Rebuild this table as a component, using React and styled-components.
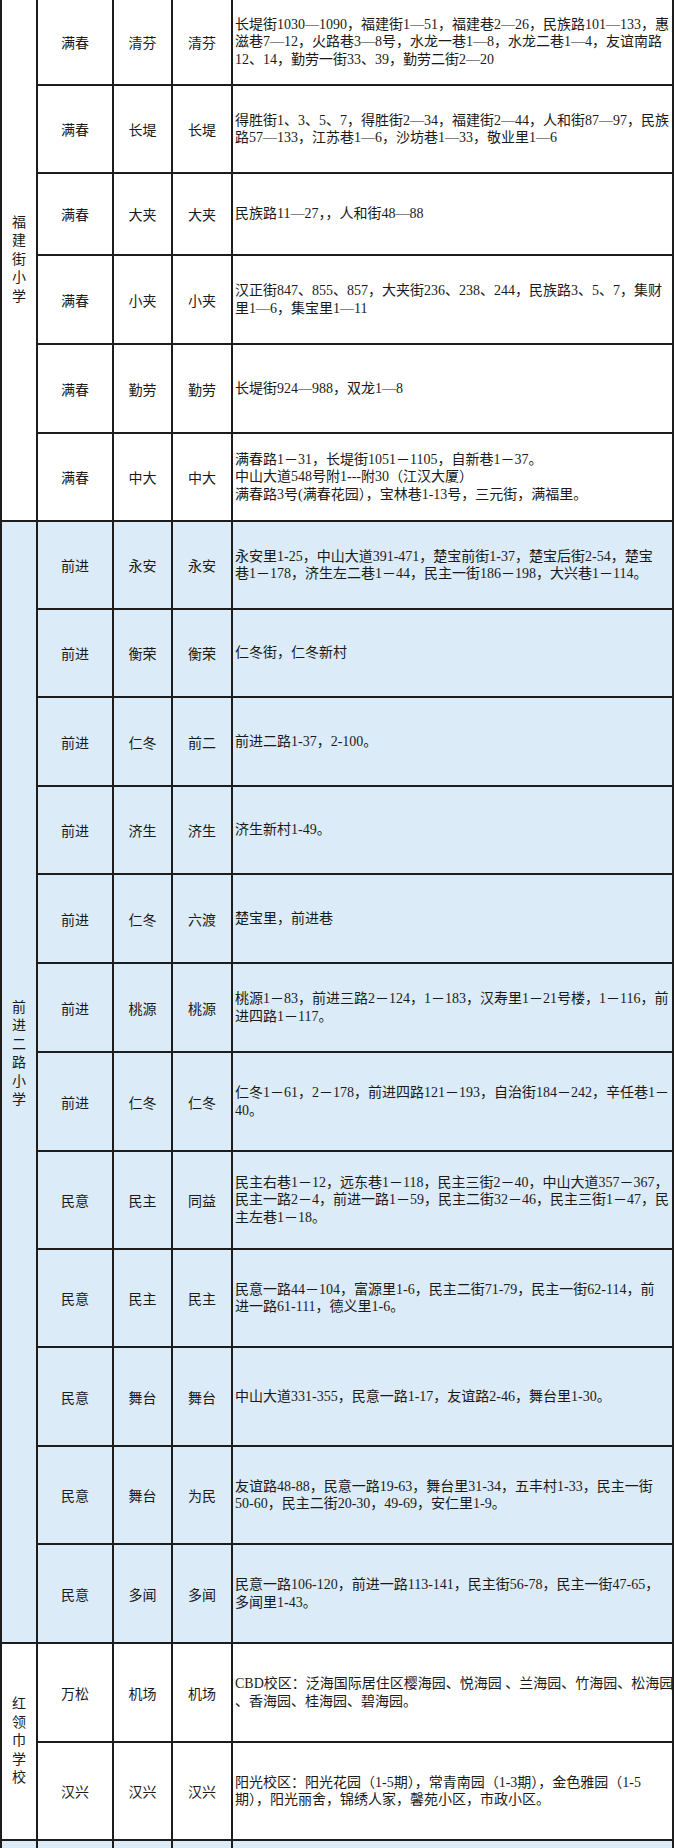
import React from "react";
import styled, { createGlobalStyle } from "styled-components";

const BLUE = "#dcebf8";
const LINE = "#1d1d1d";

const GlobalStyle = createGlobalStyle`
  html, body {
    margin: 0;
    padding: 0;
    overflow: hidden;
    background: #fff;
  }
  body {
    font-family: "Liberation Serif", "Noto Sans CJK SC", serif;
    color: #1a1a1a;
  }
`;

const Sheet = styled.div`
  width: 674px;
  height: 1848px;
  overflow: hidden;
  display: flex;
  flex-direction: column;
  font-size: 14px;
`;

const Group = styled.section`
  display: flex;
  flex-shrink: 0;
  background: ${(p) => (p.$blue ? BLUE : "#fff")};
  border-left: 2px solid ${LINE};
`;

const SchoolCell = styled.div`
  width: 36px;
  flex-shrink: 0;
  box-sizing: border-box;
  border-right: 2px solid ${LINE};
  border-bottom: 2px solid ${LINE};
  display: flex;
  align-items: center;
  justify-content: center;
  padding-bottom: ${(p) => p.$lift || 0}px;
`;

const VerticalName = styled.span`
  width: 1em;
  line-height: 18.5px;
  text-align: center;
  word-break: break-all;
`;

const Rows = styled.div`
  flex: 1;
  display: flex;
  flex-direction: column;
`;

const Row = styled.div`
  display: grid;
  grid-template-columns: 76px 59px 60px 1fr;
  height: ${(p) => p.$h}px;
`;

const Cell = styled.div`
  box-sizing: border-box;
  border-right: 2px solid ${LINE};
  border-bottom: 2px solid ${LINE};
  display: flex;
  align-items: center;
  justify-content: center;
`;

const Address = styled(Cell)`
  justify-content: flex-start;
  padding-left: 2px;
  overflow: hidden;
`;

const AddressText = styled.span`
  white-space: pre;
  line-height: 17.5px;
`;

const groups = [
  {
    school: "福建街小学",
    blue: false,
    rows: [
      { h: 86, a: "满春", b: "清芬", c: "清芬", text: "长堤街1030—1090，福建街1—51，福建巷2—26，民族路101—133，惠\n滋巷7—12，火路巷3—8号，水龙一巷1—8，水龙二巷1—4，友谊南路\n12、14，勤劳一街33、39，勤劳二街2—20" },
      { h: 88, a: "满春", b: "长堤", c: "长堤", text: "得胜街1、3、5、7，得胜街2—34，福建街2—44，人和街87—97，民族\n路57—133，江苏巷1—6，沙坊巷1—33，敬业里1—6" },
      { h: 82, a: "满春", b: "大夹", c: "大夹", text: "民族路11—27，，人和街48—88" },
      { h: 89, a: "满春", b: "小夹", c: "小夹", text: "汉正街847、855、857，大夹街236、238、244，民族路3、5、7，集财\n里1—6，集宝里1—11" },
      { h: 89, a: "满春", b: "勤劳", c: "勤劳", text: "长堤街924—988，双龙1—8" },
      { h: 88, a: "满春", b: "中大", c: "中大", text: "满春路1－31，长堤街1051－1105，自新巷1－37。\n中山大道548号附1---附30（江汉大厦）\n满春路3号(满春花园），宝林巷1-13号，三元街，满福里。" },
    ],
  },
  {
    school: "前进二路小学",
    blue: true,
    lift: 56,
    rows: [
      { h: 88, a: "前进", b: "永安", c: "永安", text: "永安里1-25，中山大道391-471，楚宝前街1-37，楚宝后街2-54，楚宝\n巷1－178，济生左二巷1－44，民主一街186－198，大兴巷1－114。" },
      { h: 88, a: "前进", b: "衡荣", c: "衡荣", text: "仁冬街，仁冬新村" },
      { h: 89, a: "前进", b: "仁冬", c: "前二", text: "前进二路1-37，2-100。" },
      { h: 88, a: "前进", b: "济生", c: "济生", text: "济生新村1-49。" },
      { h: 89, a: "前进", b: "仁冬", c: "六渡", text: "楚宝里，前进巷" },
      { h: 89, a: "前进", b: "桃源", c: "桃源", text: "桃源1－83，前进三路2－124，1－183，汉寿里1－21号楼，1－116，前\n进四路1－117。" },
      { h: 99, a: "前进", b: "仁冬", c: "仁冬", text: "仁冬1－61，2－178，前进四路121－193，自治街184－242，辛任巷1－\n40。" },
      { h: 98, a: "民意", b: "民主", c: "同益", text: "民主右巷1－12，远东巷1－118，民主三街2－40，中山大道357－367，\n民主一路2－4，前进一路1－59，民主二街32－46，民主三街1－47，民\n主左巷1－18。" },
      { h: 98, a: "民意", b: "民主", c: "民主", text: "民意一路44－104，富源里1-6，民主二街71-79，民主一街62-114，前\n进一路61-111，德义里1-6。" },
      { h: 99, a: "民意", b: "舞台", c: "舞台", text: "中山大道331-355，民意一路1-17，友谊路2-46，舞台里1-30。" },
      { h: 98, a: "民意", b: "舞台", c: "为民", text: "友谊路48-88，民意一路19-63，舞台里31-34，五丰村1-33，民主一街\n50-60，民主二街20-30，49-69，安仁里1-9。" },
      { h: 99, a: "民意", b: "多闻", c: "多闻", text: "民意一路106-120，前进一路113-141，民主街56-78，民主一街47-65，\n多闻里1-43。" },
    ],
  },
  {
    school: "红领巾学校",
    blue: false,
    rows: [
      { h: 99, a: "万松", b: "机场", c: "机场", text: "CBD校区：泛海国际居住区樱海园、悦海园 、兰海园、竹海园、松海园\n、香海园、桂海园、碧海园。" },
      { h: 98, a: "汉兴", b: "汉兴", c: "汉兴", text: "阳光校区：阳光花园（1-5期），常青南园（1-3期），金色雅园（1-5\n期），阳光丽舍，锦绣人家，馨苑小区，市政小区。" },
    ],
  },
  {
    school: "",
    blue: true,
    rows: [{ h: 90, a: "", b: "", c: "", text: "" }],
  },
];

const App = () => (
  <Sheet>
    <GlobalStyle />
    {groups.map((g, gi) => (
      <Group key={gi} $blue={g.blue}>
        <SchoolCell $lift={g.lift}>
          <VerticalName>{g.school}</VerticalName>
        </SchoolCell>
        <Rows>
          {g.rows.map((r, ri) => (
            <Row key={ri} $h={r.h}>
              <Cell>{r.a}</Cell>
              <Cell>{r.b}</Cell>
              <Cell>{r.c}</Cell>
              <Address>
                <AddressText>{r.text}</AddressText>
              </Address>
            </Row>
          ))}
        </Rows>
      </Group>
    ))}
  </Sheet>
);

export default App;
